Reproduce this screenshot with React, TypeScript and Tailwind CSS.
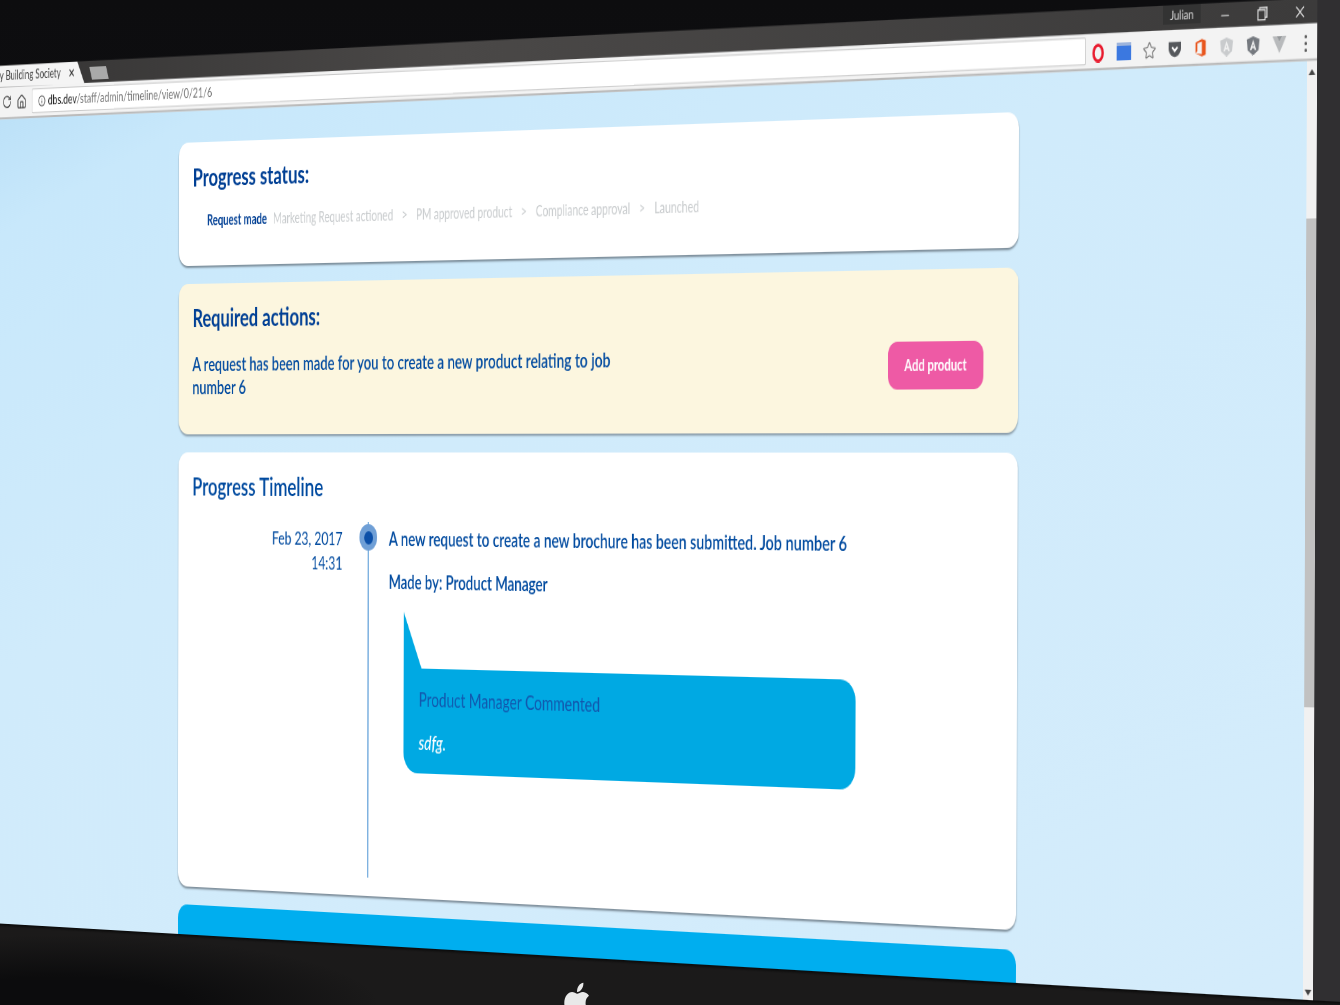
import { FaApple } from 'react-icons/fa';
import { Home, Info, Minus, RotateCw, Star, X } from 'lucide-react';

type Pt = [number, number];

// where the page's flat coordinates land in the photo of the monitor
const FLAT = { u0: 353, v0: 91, w: 1170, h: 761 };
const QUAD: Pt[] = [[179, 143], [1019, 112], [1016, 950], [178, 904]];

const homography = () => {
  const [[x0, y0], [x1, y1], [x2, y2], [x3, y3]] = QUAD;
  const dx1 = x1 - x2, dx2 = x3 - x2, sx = x0 - x1 + x2 - x3;
  const dy1 = y1 - y2, dy2 = y3 - y2, sy = y0 - y1 + y2 - y3;
  const den = dx1 * dy2 - dx2 * dy1;
  const g = (sx * dy2 - dx2 * sy) / den;
  const h = (dx1 * sy - sx * dy1) / den;
  const a = x1 - x0 + g * x1, b = x3 - x0 + h * x3;
  const d = y1 - y0 + g * y1, e = y3 - y0 + h * y3;
  const { u0, v0, w, h: fh } = FLAT;
  const m = [
    a / w, d / w, 0, g / w,
    b / fh, e / fh, 0, h / fh,
    0, 0, 1, 0,
    x0 - (a * u0) / w - (b * v0) / fh, y0 - (d * u0) / w - (e * v0) / fh, 0, 1 - (g * u0) / w - (h * v0) / fh,
  ];
  return `matrix3d(${m.join(',')})`;
};

const Shield = ({ fill }: { fill: string }) => (
  <svg viewBox="0 0 20 22" className="w-[17px] h-[17px]">
    <path d="M10 0 L20 3.5 L18.5 16 L10 22 L1.5 16 L0 3.5 Z" fill={fill} />
    <path d="M10 4 L15 16 H12.6 L11.7 13.5 H8.3 L7.4 16 H5 Z M9 11.5 H11 L10 8.5 Z" fill="#f2f2f2" fillRule="evenodd" />
  </svg>
);

const ToolbarIcons = () => (
  <div className="flex items-center pt-[3px] -mr-[2px]">
    <div className="w-[31.5px] flex justify-center">
      <svg viewBox="0 0 20 24" className="w-[16px] h-[17px]"><ellipse cx="10" cy="12" rx="8" ry="10" fill="none" stroke="#e8192c" strokeWidth="4" /></svg>
    </div>
    <div className="w-[31.5px] flex justify-center">
      <div className="w-[18px] h-[16px] bg-[#3b78e0] border-t-[3px] border-[#9db4dc]" />
    </div>
    <div className="w-[31.5px] flex justify-center"><Star className="w-[17px] h-[17px] text-[#777]" strokeWidth={1.6} /></div>
    <div className="w-[31.5px] flex justify-center">
      <svg viewBox="0 0 20 18" className="w-[19px] h-[15px]">
        <path d="M1 1 H19 V8 C19 13 14 17 10 17 C6 17 1 13 1 8 Z" fill="#55585c" />
        <path d="M6 6.5 L10 10.5 L14 6.5" fill="none" stroke="#fff" strokeWidth="2.4" />
      </svg>
    </div>
    <div className="w-[31.5px] flex justify-center">
      <svg viewBox="0 0 18 22" className="w-[14px] h-[18px]">
        <path d="M1 5 L11 1 L17 3 V19 L11 21 L1 17 L11 18.5 V4 L4 6 V15 L1 17 Z" fill="#e8561e" />
      </svg>
    </div>
    <div className="w-[31.5px] flex justify-center"><Shield fill="#c9cbcd" /></div>
    <div className="w-[31.5px] flex justify-center"><Shield fill="#75797f" /></div>
    <div className="w-[31.5px] flex justify-center">
      <svg viewBox="0 0 20 18" className="w-[20px] h-[15px]">
        <path d="M0 0 H6 L10 6 L14 0 H20 L10 18 Z" fill="#b8babc" />
        <path d="M6 0 H14 L10 6 Z" fill="#95989b" />
      </svg>
    </div>
    <div className="w-[31.5px] flex flex-col items-center gap-[3px]">
      <div className="w-[3px] h-[3px] rounded-full bg-[#555]" />
      <div className="w-[3px] h-[3px] rounded-full bg-[#555]" />
      <div className="w-[3px] h-[3px] rounded-full bg-[#555]" />
    </div>
  </div>
);

const WindowChrome = () => (
  <div className="relative z-10 shrink-0 [transform:skewY(-0.15deg)]">
    <div className="h-[22px] flex items-end bg-[linear-gradient(90deg,#333232_0%,#4a4847_40%,#3c3b3b_100%)]">
      <div className="w-[206px] h-[22px] bg-[#f4f4f4] [clip-path:polygon(0_0,195px_0,100%_100%,0_100%)] flex items-center justify-end pr-[14px] gap-[11px] overflow-hidden">
        <span className="text-[12.5px] whitespace-nowrap text-[#444]">Dursley Building Society</span>
        <X className="w-[12px] h-[12px] shrink-0 text-[#333]" strokeWidth={2.5} />
      </div>
      <div className="ml-[10px] mb-[3px] w-[26px] h-[13px] bg-[#a9a9a9] skew-x-[18deg]" />
      <div className="ml-auto -mr-[5px] flex items-center h-[22px]">
        <div className="mb-[5px] w-[46px] h-[17px] bg-[#333] flex items-center justify-center text-[11.5px] text-[#e6e6e6]">Julian</div>
        <div className="w-[52px] ml-[3px] flex justify-center"><Minus className="w-[15px] h-[15px] text-[#ddd]" strokeWidth={1.5} /></div>
        <div className="w-[38px] flex justify-center">
          <svg viewBox="0 0 12 12" className="w-[13px] h-[13px]" fill="none" stroke="#ddd" strokeWidth="1.2">
            <path d="M3 3 V1 H11 V9 H9" />
            <rect x="1" y="3" width="8" height="8" />
          </svg>
        </div>
        <div className="w-[52px] flex justify-center"><X className="w-[17px] h-[17px] text-[#eee]" strokeWidth={1.6} /></div>
      </div>
    </div>
    <div className="h-[33px] bg-[#f3f3f3] border-b-2 border-[#b9b9b9] flex items-center">
      <div className="w-[123px] flex justify-end items-center gap-[8px] pr-[8px]">
        <RotateCw className="w-[15px] h-[15px] text-[#444]" strokeWidth={2} />
        <Home className="w-[16px] h-[16px] text-[#444]" strokeWidth={2} />
      </div>
      <div className="w-[1490px] h-[25px] bg-white border border-[#c8c8c8] rounded-[2px] flex items-center pl-[9px] gap-[4px] text-[13.5px]">
        <Info className="w-[12px] h-[12px] text-[#444]" strokeWidth={2} />
        <span className="text-[#222]">dbs.dev<span className="text-[#777]">/staff/admin/timeline/view/0/21/6</span></span>
      </div>
      <div className="ml-auto"><ToolbarIcons /></div>
    </div>
  </div>
);

const steps = ['PM approved product', 'Compliance approval', 'Launched'];

const ProgressStatus = () => (
  <div className="h-[123px] rounded-[14px] bg-white pt-[20px] pl-[21px] shadow-[0_2px_2px_rgba(70,80,90,0.6)]">
    <h2 className="text-[25px] leading-[28px] font-bold text-[#003f94]">Progress status:</h2>
    <div className="mt-[20px] pl-[22px] flex items-center text-[14.4px] leading-[20px] text-[#c9ccce]">
      <span className="font-bold text-[#003f94]">Request made</span>
      <span className="ml-[9px]">Marketing Request actioned</span>
      {steps.map(step => (
        <span key={step} className="flex items-center">
          <span className="mx-[12.5px]">&gt;</span>
          <span>{step}</span>
        </span>
      ))}
    </div>
  </div>
);

const RequiredActions = () => (
  <div className="h-[150px] rounded-[14px] bg-[#fcf6df] pt-[19px] pl-[21px] pr-[44px] shadow-[0_2px_2px_rgba(70,80,90,0.5)]">
    <h2 className="text-[25px] leading-[28px] font-bold text-[#003f94]">Required actions:</h2>
    <div className="mt-[19px] flex items-start justify-between">
      <p className="w-[640px] pt-[2px] text-[19.25px] leading-[23px] font-semibold text-[#004a9f]">
        A request has been made for you to create a new product relating to job number 6
      </p>
      <button className="w-[123px] h-[44px] rounded-[12px] bg-[#ee5aa5] text-white text-[14.5px] font-bold">Add product</button>
    </div>
  </div>
);

const Timeline = () => (
  <div className="h-[434px] rounded-[14px] bg-white pt-[19px] pl-[21px] shadow-[0_2px_2px_rgba(70,80,90,0.6)]">
    <h2 className="text-[25.3px] leading-[28px] font-semibold text-[#004a9f]">Progress Timeline</h2>
    <div className="mt-[21px] flex">
      <div className="w-[226px] pt-[4px] text-right text-[18px] leading-[24px] text-[#004a9f]">
        <div>Feb 23, 2017</div>
        <div>14:31</div>
      </div>
      <div className="w-[60px] ml-[8px] relative flex justify-center">
        <div className="w-[2px] h-[348px] bg-[#7fb2e0]" />
        <div className="absolute top-[2px] left-[17px] w-[26px] h-[26px] rounded-full bg-[#6f9fd6] flex items-center justify-center">
          <div className="w-[13px] h-[13px] rounded-full bg-[#0b4fa8]" />
        </div>
      </div>
      <div className="pt-[3px] text-[#004a9f]">
        <p className="text-[19.3px] leading-[26px] font-semibold">A new request to create a new brochure has been submitted. Job number 6</p>
        <p className="mt-[16px] text-[19px] leading-[26px] font-semibold">Made by: Product Manager</p>
        <div className="mt-[16px] ml-[22px]">
          <div className="w-[26px] h-[55px] bg-[#00a9e3] [clip-path:polygon(0_0,100%_100%,0_100%)]" />
          <div className="w-[625px] h-[102px] bg-[#00a9e3] rounded-[20px] rounded-tl-none pl-[22px] pt-[17px]">
            <p className="text-[19.5px] leading-[26px] text-[#1257ad]">Product Manager Commented</p>
            <p className="mt-[16px] text-[20px] leading-[24px] italic font-medium text-white">sdfg.</p>
          </div>
        </div>
      </div>
    </div>
  </div>
);

const Scrollbar = () => (
  <div className="w-[12px] shrink-0 bg-[#f1f1f1] flex flex-col items-center pt-[9px]">
    <div className="border-x-[4px] border-b-[5px] border-x-transparent border-b-[#444]" />
    <div className="mt-[126px] w-[12px] h-[430px] bg-[#c1c1c1]" />
    <div className="mt-auto mb-[4px] border-x-[4px] border-t-[5px] border-x-transparent border-t-[#444]" />
  </div>
);

export default function App() {
  return (
    <div className="relative w-[1340px] h-[1005px] overflow-hidden bg-[radial-gradient(ellipse_320px_70px_at_60px_1005px,#0c0c0d_40%,transparent_100%),linear-gradient(180deg,#0d0d0f_0%,#111113_50%,#1c1a1a_60%,#1b1a1a_100%)] font-['Lato',sans-serif]">
      <div className="w-[1960px] h-[882px] origin-top-left flex shadow-[0_2px_2px_#0b0b0b]" style={{ transform: homography() }}>
        <div className="w-[1888px] h-[882px] pt-[3px] flex flex-col shrink-0">
          <WindowChrome />
          <div className="-mt-[4px] flex-1 min-h-0 flex">
            <div className="flex-1 overflow-hidden bg-[linear-gradient(160deg,#b9dff7_0%,#c8e8fb_10%,#d0ebfb_40%,#d4ecfb_100%)]">
              <div className="w-[1170px] mx-auto pt-[37px] flex flex-col gap-[18px]">
                <ProgressStatus />
                <RequiredActions />
                <Timeline />
                <div className="h-[200px] rounded-[14px] bg-[#00aeef]" />
              </div>
            </div>
            <Scrollbar />
          </div>
        </div>
        <div className="flex-1 bg-[#302f31]" />
      </div>
      <FaApple className="absolute left-[564px] top-[980px] w-[26px] h-[44px] text-[#e9e9e9]" preserveAspectRatio="none" />
    </div>
  );
}
